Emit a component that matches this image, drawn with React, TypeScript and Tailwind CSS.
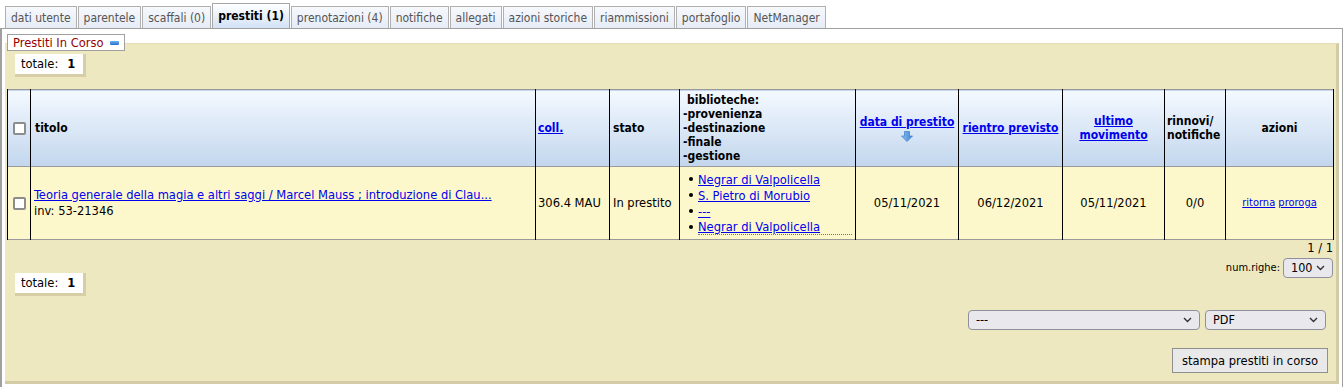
import React from 'react';

const tabs = [
  { label: 'dati utente' },
  { label: 'parentele' },
  { label: 'scaffali (0)' },
  { label: 'prestiti (1)', active: true },
  { label: 'prenotazioni (4)' },
  { label: 'notifiche' },
  { label: 'allegati' },
  { label: 'azioni storiche' },
  { label: 'riammissioni' },
  { label: 'portafoglio' },
  { label: 'NetManager' },
];

const biblioteche = ['Negrar di Valpolicella', 'S. Pietro di Morubio', '---', 'Negrar di Valpolicella'];

function Checkbox() {
  return <span className="inline-block w-[13px] h-[13px] border-2 border-[#8d8d8d] rounded-[2px] bg-white align-middle" />;
}

function Chevron() {
  return (
    <svg width="9" height="6" viewBox="0 0 9 6" className="shrink-0">
      <path d="M1 1 L4.5 4.5 L8 1" stroke="#333" strokeWidth="1.4" fill="none" />
    </svg>
  );
}

function Select({ value, className }: { value: string; className: string }) {
  return (
    <div className={`flex items-center justify-between h-[20px] border border-[#8f8f9d] rounded-[4px] bg-[#e9e9ed] pl-[7px] pr-[7px] text-[12.5px] text-black ${className}`}>
      <span>{value}</span>
      <Chevron />
    </div>
  );
}

function TotaleBox() {
  return (
    <div className="flex w-fit items-center h-[23px] bg-white pl-[6px] pr-[8px] border-r-[3px] border-b-[3px] border-[#d6cea6] text-black">
      <span>totale:</span>
      <span className="font-bold ml-[9px]">1</span>
    </div>
  );
}

function SortArrow() {
  return (
    <svg width="12" height="11" viewBox="0 0 12 11" className="mx-auto mt-[2px]">
      <defs>
        <linearGradient id="arr" x1="0" y1="0" x2="1" y2="0">
          <stop offset="0" stopColor="#8fc0ee" />
          <stop offset="1" stopColor="#3b82d6" />
        </linearGradient>
      </defs>
      <path d="M3.5 0.5 H8.5 V5 H11.5 L6 10.5 L0.5 5 H3.5 Z" fill="url(#arr)" stroke="#4a86c8" strokeWidth="0.8" />
    </svg>
  );
}

export default function App() {
  return (
    <div className="w-[1343px] h-[387px] overflow-hidden bg-white text-[12.8px] text-black font-['DejaVu_Sans_Condensed','DejaVu_Sans',sans-serif] leading-[14px]">
      {/* Tabs */}
      <div className="flex items-end h-[28px] pl-[5px] gap-px text-[12px]">
        {tabs.map((t) =>
          t.active ? (
            <div key={t.label} className="h-[25px] px-[5px] flex items-center border border-b-0 border-[#a6a6a6] bg-linear-to-b from-[#ffffff] to-[#d3e2f6] font-bold text-black">
              {t.label}
            </div>
          ) : (
            <div key={t.label} className="h-[22px] px-[5px] flex items-center border border-b-0 border-[#b0b0b0] bg-linear-to-b from-[#f6f8fc] to-[#e6ecf6] text-[#555]">
              {t.label}
            </div>
          )
        )}
      </div>

      {/* Panel */}
      <div className="border-t border-l-2 border-r border-[#a0a0a0] pt-[14px] pl-[3px] pr-[3px] h-[359px]">
        <div className="bg-[#eee8c1] border-t border-[#e3dcb4] border-r-[3px] border-b-[3px] border-r-[#d3cba6] border-b-[#d3cba6] h-[341px] pl-[2px]">
          {/* Legend */}
          <div className="-mt-[10px] flex w-fit items-center h-[17px] px-[5px] bg-white border border-[#a0a0a0] text-[#990000]">
            <span>Prestiti In Corso</span>
            <span className="ml-[6px] inline-block w-[9px] h-[4px] rounded-[1px] bg-linear-to-b from-[#6fb0f0] to-[#1f6fd0]" />
          </div>

          <div className="ml-[8px] mt-[3px]">
            <TotaleBox />
          </div>

          {/* Table */}
          <table className="mt-[12px] w-[1326px] table-fixed border-collapse">
            <colgroup>
              <col className="w-[23px]" />
              <col className="w-[505px]" />
              <col className="w-[74px]" />
              <col className="w-[70px]" />
              <col className="w-[176px]" />
              <col className="w-[103px]" />
              <col className="w-[104px]" />
              <col className="w-[102px]" />
              <col className="w-[61px]" />
              <col className="w-[108px]" />
            </colgroup>
            <thead>
              <tr className="h-[77px] bg-linear-to-b from-[#f4f9ff] to-[#c2d6ed] border-t border-[#9a9a9a] font-bold text-[12px]">
                <td className="border-l border-r border-black text-center p-0"><Checkbox /></td>
                <td className="border-r border-black px-[4px]">titolo</td>
                <td className="border-r border-black px-[2px]">
                  <a href="#" className="text-[#0000ee] underline">coll.</a>
                </td>
                <td className="border-r border-black px-[3px]">stato</td>
                <td className="border-r border-black px-[3px]">
                  <div className="pl-[4px]">biblioteche:</div>
                  <div>-provenienza</div>
                  <div>-destinazione</div>
                  <div>-finale</div>
                  <div>-gestione</div>
                </td>
                <td className="border-r border-black text-center px-0 whitespace-nowrap">
                  <a href="#" className="text-[#0000ee] underline">data di prestito</a>
                  <SortArrow />
                </td>
                <td className="border-r border-black text-center px-0 whitespace-nowrap">
                  <a href="#" className="text-[#0000ee] underline">rientro previsto</a>
                </td>
                <td className="border-r border-black text-center px-[2px]">
                  <a href="#" className="text-[#0000ee] underline">ultimo<br />movimento</a>
                </td>
                <td className="border-r border-black pl-[2px] pr-0">rinnovi/<br />notifiche</td>
                <td className="border-r border-black text-center">azioni</td>
              </tr>
            </thead>
            <tbody>
              <tr className="h-[73px] bg-[#fdf8cc] border-t border-b border-[#9a9a9a]">
                <td className="border-l border-r border-black text-center p-0"><Checkbox /></td>
                <td className="border-r border-black px-[3px]">
                  <a href="#" className="text-[#0000ee] underline whitespace-nowrap">Teoria generale della magia e altri saggi / Marcel Mauss ; introduzione di Clau...</a>
                  <div className="mt-[2px]">inv: 53-21346</div>
                </td>
                <td className="border-r border-black px-[2px] whitespace-nowrap">306.4 MAU</td>
                <td className="border-r border-black px-[3px] whitespace-nowrap">In prestito</td>
                <td className="border-r border-black px-[3px]">
                  <ul className="pl-[6px]">
                    {biblioteche.map((b, i) => (
                      <li key={i} className="flex items-center h-[16px]">
                        <span className="w-[9px] shrink-0">
                          <span className="block w-[4px] h-[4px] rounded-full bg-black" />
                        </span>
                        <span className={`flex-1 leading-[15px] ${i === biblioteche.length - 1 ? 'border-b border-dotted border-[#777]' : ''}`}>
                          <a href="#" className="text-[#0000ee] underline">{b}</a>
                        </span>
                      </li>
                    ))}
                  </ul>
                </td>
                <td className="border-r border-black text-center">05/11/2021</td>
                <td className="border-r border-black text-center">06/12/2021</td>
                <td className="border-r border-black text-center">05/11/2021</td>
                <td className="border-r border-black text-center">0/0</td>
                <td className="border-r border-black text-center text-[11px]">
                  <a href="#" className="text-[#0000ee] underline">ritorna</a>{' '}
                  <a href="#" className="text-[#0000ee] underline">proroga</a>
                </td>
              </tr>
            </tbody>
          </table>

          {/* Pager + totale */}
          <div className="flex items-start justify-between w-[1326px]">
            <div className="ml-[8px] mt-[33px]">
              <TotaleBox />
            </div>
            <div className="flex flex-col items-end pt-[1px]">
              <div>1 / 1</div>
              <div className="flex items-center mt-[3px] text-[11px]">
                <span className="mr-[3px]">num.righe:</span>
                <Select value="100" className="w-[50px]" />
              </div>
            </div>
          </div>

          {/* Print controls */}
          <div className="flex justify-end gap-[5px] mt-[14px] pr-[10px]">
            <Select value="---" className="w-[232px]" />
            <Select value="PDF" className="w-[121px]" />
          </div>
          <div className="flex justify-end mt-[18px] pr-[8px]">
            <button className="h-[25px] w-[156px] border border-[#8f8f8f] bg-[#e9e9e9] text-black">
              stampa prestiti in corso
            </button>
          </div>
        </div>
      </div>
    </div>
  );
}
